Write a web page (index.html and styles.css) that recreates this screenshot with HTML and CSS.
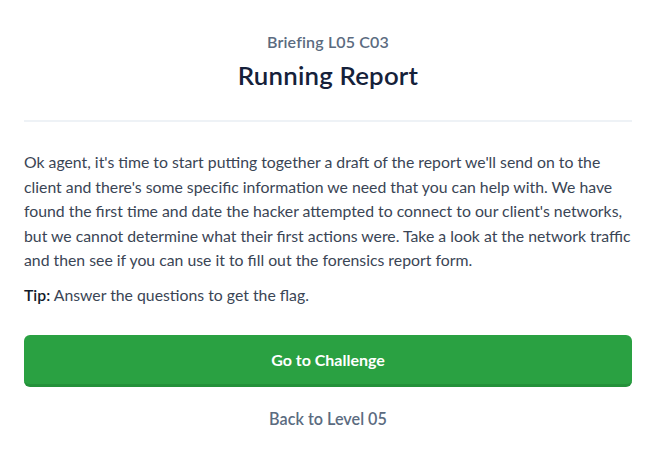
FILE: index.html
```html
<!DOCTYPE html>
<html lang="en">
<head>
<meta charset="utf-8">
<link rel="stylesheet" href="styles.css">
</head>
<body>
<main class="briefing">
  <header class="head">
    <div class="kicker">Briefing L05 C03</div>
    <h1 class="title">Running Report</h1>
  </header>
  <section class="body">
    <p class="text">Ok agent, it's time to start putting together a draft of the report we'll send on to the client and there's some specific information we need that you can help with. We have found the first time and date the hacker attempted to connect to our client's networks, but we cannot determine what their first actions were. Take a look at the network traffic and then see if you can use it to fill out the forensics report form.</p>
    <p class="tip"><strong>Tip:</strong> Answer the questions to get the flag.</p>
  </section>
  <a class="btn" href="#">Go to Challenge</a>
  <a class="back" href="#">Back to Level 05</a>
</main>
</body>
</html>
```
FILE: styles.css
```css
html, body { margin: 0; padding: 0; background: #fff; }
body {
  font-family: Lato, "Liberation Sans", sans-serif;
  color: #3a4555;
}
.briefing {
  padding: 0 25px 0 24px;
  display: flex;
  flex-direction: column;
}
.head {
  text-align: center;
  padding-top: 32px;
  padding-bottom: 30px;
  border-bottom: 2px solid #eef2f6;
}
.kicker {
  font-size: 16px;
  line-height: 20px;
  color: #5b6b80;
  font-weight: 600;
  letter-spacing: 0.15px;
}
.title {
  margin: 8px 0 0;
  font-size: 25.8px;
  line-height: 30px;
  font-weight: 600;
  color: #15213a;
  letter-spacing: 0.2px;
}
.body { padding-top: 28px; }
.text {
  margin: 0;
  font-size: 15.8px;
  line-height: 24.5px;
}
.tip {
  margin: 10px 0 0;
  font-size: 15.8px;
  line-height: 24px;
}
.tip strong { color: #111a2a; font-weight: 600; }
.btn {
  margin-top: 28px;
  display: block;
  height: 49px;
  line-height: 50px;
  text-align: center;
  background: #2aa142;
  border-bottom: 3px solid #24913a;
  border-radius: 6px;
  color: #fff;
  font-weight: 700;
  font-size: 16px;
  text-decoration: none;
}
.back {
  margin-top: 22px;
  text-align: center;
  color: #5b6b80;
  font-weight: 600;
  font-size: 16.2px;
  line-height: 20px;
  text-decoration: none;
}
```
